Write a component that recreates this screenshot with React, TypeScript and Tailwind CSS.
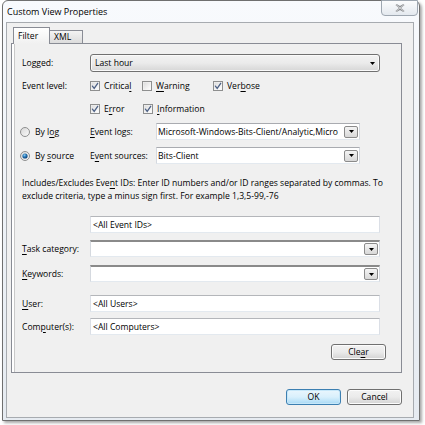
import type { ReactNode } from 'react'

// access-key letter, underlined the way Windows dialogs show them
const Key = ({ children }: { children: ReactNode }) => (
  <span className="underline decoration-[0.6px] underline-offset-[1.5px]">{children}</span>
)

const CheckBox = ({ checked, children, className = '' }: { checked?: boolean; children: ReactNode; className?: string }) => (
  <div className={`flex items-center gap-[4px] ${className}`}>
    <svg width="10" height="10" viewBox="0 0 10 10" className="shrink-0">
      <defs>
        <linearGradient id="cbFill" x1="0" y1="0" x2="1" y2="1">
          <stop offset="0" stopColor="#dcdcdc" />
          <stop offset="1" stopColor="#ffffff" />
        </linearGradient>
      </defs>
      <rect x="0.5" y="0.5" width="9" height="9" fill="#f4f4f4" stroke="#8e8f8f" />
      <rect x="1.5" y="1.5" width="7" height="7" fill="url(#cbFill)" />
      {checked && (
        <path d="M2.4 5.1 L4.2 7.3 L7.7 2.3" stroke="#4d6185" strokeWidth="1.3" fill="none" strokeLinecap="round" />
      )}
    </svg>
    <span>{children}</span>
  </div>
)

const Radio = ({ checked, children }: { checked?: boolean; children: ReactNode }) => (
  <div className="flex items-center gap-[5px]">
    <svg width="10" height="10" viewBox="0 0 10 10" className="shrink-0">
      <defs>
        <radialGradient id="rbDot" cx="0.4" cy="0.35" r="0.7">
          <stop offset="0" stopColor="#8fd0f5" />
          <stop offset="0.5" stopColor="#1f6fb0" />
          <stop offset="1" stopColor="#0d3b6e" />
        </radialGradient>
        <linearGradient id="rbFill" x1="0" y1="0" x2="1" y2="1">
          <stop offset="0" stopColor="#d6d6d6" />
          <stop offset="1" stopColor="#fbfbfb" />
        </linearGradient>
      </defs>
      <circle cx="5" cy="5" r="4.5" fill="url(#rbFill)" stroke="#8e8f8f" />
      {checked && <circle cx="5" cy="5" r="2.6" fill="url(#rbDot)" />}
    </svg>
    <span>{children}</span>
  </div>
)

const Arrow = () => (
  <svg width="5" height="3" viewBox="0 0 5 3">
    <path d="M0 0 H5 L2.5 3 Z" fill="#000" />
  </svg>
)

// small drop button that sits inside an editable combo
const DropButton = () => (
  <div className="mr-[1px] flex h-[12px] w-[14px] shrink-0 items-center justify-center rounded-[2px] border border-[#8b8b8b] bg-gradient-to-b from-[#f4f4f4] to-[#d8d8d8]">
    <Arrow />
  </div>
)

const EditCombo = ({ value, width, strongTop }: { value?: string; width: string; strongTop?: boolean }) => (
  <div
    className={`flex h-[17px] items-center bg-white border border-b-[#e3e9ef] border-x-[#d5d9df] ${
      strongTop ? 'border-t-2 border-t-[#8a8a8a]' : 'border-t-[#a9abb0]'
    } ${width}`}
  >
    <div className="flex-1 overflow-hidden whitespace-nowrap pl-[1px]">{value}</div>
    <DropButton />
  </div>
)

const TextBox = ({ value }: { value: string }) => (
  <div className="flex h-[17px] w-[290px] items-center border border-t-[#b4b6ba] border-x-[#dbdfe6] border-b-[#e3e9ef] bg-white pl-[2px]">
    {value}
  </div>
)

const Button = ({ children, primary }: { children: ReactNode; primary?: boolean }) => (
  <div
    className={`flex h-[16px] items-center justify-center rounded-[3px] border ${
      primary
        ? 'border-[#3c7fb1] bg-gradient-to-b from-[#eaf6fd] via-[#d9f0fc] to-[#a7d9f5] shadow-[inset_0_0_0_1px_#c6e7f9]'
        : 'border-[#707070] bg-gradient-to-b from-[#f2f2f2] via-[#ebebeb] to-[#d3d3d3] shadow-[inset_0_0_0_1px_#fcfcfc]'
    } w-[55px]`}
  >
    {children}
  </div>
)

export default function App() {
  return (
    <div className="h-[425px] w-[425px] overflow-hidden bg-white pt-0 font-['Open_Sans',sans-serif] text-[8.6px] leading-[12px] text-black">
      <div className="ml-[2px] flex h-[421px] w-[418px] flex-col rounded-t-[6px] border border-[#6f6f6f] bg-gradient-to-b from-[#f8fafd] via-[#eef2f7] to-[#e6ebf1] shadow-[2px_2px_3px_rgba(0,0,0,0.35)]">
        {/* title bar */}
        <div className="relative flex h-[21px] shrink-0 items-center pl-[4px] text-[9px]">
          <span>Custom View Properties</span>
          <div className="absolute right-[1px] top-[-1px] flex h-[16px] w-[37px] items-center justify-center rounded-b-[4px] border border-[#9ea7b1] bg-gradient-to-b from-[#fbfcfd] to-[#e4e9ef]">
            <svg width="10" height="8" viewBox="0 0 10 8">
              <path d="M1 0.5 L5 3 L9 0.5 M1 7.5 L5 5 L9 7.5 M1 0.5 L9 7.5 M9 0.5 L1 7.5" stroke="#8c8f93" strokeWidth="1.6" fill="none" />
              <path d="M1 0.5 L9 7.5 M9 0.5 L1 7.5" stroke="#f5f5f5" strokeWidth="0.6" fill="none" />
            </svg>
          </div>
        </div>

        {/* client area */}
        <div className="mb-[2px] ml-[3px] flex w-[408px] flex-1 flex-col border border-[#a7abb0] bg-[#f0f0f0] pt-[4px]">
          {/* tabs */}
          <div className="ml-[4px] flex h-[16px] items-end pl-[2px]">
            <div className="relative z-10 -mb-px flex h-[17px] w-[37px] items-start border border-b-0 border-[#898c95] bg-gradient-to-b from-[#ffffff] to-[#f0f0f0] pl-[4px] pt-[2px]">
              Filter
            </div>
            <div className="flex h-[13px] w-[33px] items-center border border-l-0 border-b-0 border-[#898c95] bg-gradient-to-b from-[#f3f3f3] to-[#dcdcdc] pl-[4px]">
              XML
            </div>
          </div>

          {/* tab page */}
          <div className="ml-[4px] flex h-[330px] w-[391px] flex-col border border-[#898c95] bg-[#f0f0f0] shadow-[inset_2px_0_0_#ffffff,inset_3px_0_0_#c9c9c9]">
            <div className="mt-[10px] flex h-[18px] items-center pl-[10px]">
              <div className="w-[68px]">Logged:</div>
              <div className="flex h-[18px] w-[290px] items-center justify-between rounded-[3px] border border-[#707070] bg-gradient-to-b from-[#f2f2f2] via-[#ebebeb] to-[#d6d6d6] pl-[4px] pr-[4px] shadow-[inset_0_0_0_1px_#fafafa]">
                <span>Last hour</span>
                <Arrow />
              </div>
            </div>

            <div className="mt-[7px] flex h-[13px] items-center pl-[10px]">
              <div className="w-[68px]">Event level:</div>
              <CheckBox checked className="w-[52px]">
                Critica<Key>l</Key>
              </CheckBox>
              <CheckBox className="w-[71px]">
                <Key>W</Key>arning
              </CheckBox>
              <CheckBox checked>
                Ver<Key>b</Key>ose
              </CheckBox>
            </div>

            <div className="mt-[10px] flex h-[13px] items-center pl-[78px]">
              <CheckBox checked className="w-[53px]">
                E<Key>r</Key>ror
              </CheckBox>
              <CheckBox checked>
                <Key>I</Key>nformation
              </CheckBox>
            </div>

            <div className="mt-[8px] flex h-[17px] items-center pl-[8px]">
              <div className="w-[70px]">
                <Radio>
                  By l<Key>o</Key>g
                </Radio>
              </div>
              <div className="w-[66px]">
                <Key>E</Key>vent logs:
              </div>
              <EditCombo width="w-[204px]" value="Microsoft-Windows-Bits-Client/Analytic,Micro" />
            </div>

            <div className="mt-[7px] flex h-[17px] items-center pl-[8px]">
              <div className="w-[70px]">
                <Radio checked>
                  By <Key>s</Key>ource
                </Radio>
              </div>
              <div className="w-[66px]">
                E<Key>v</Key>ent sources:
              </div>
              <EditCombo width="w-[204px]" value="Bits-Client" />
            </div>

            <div className="mt-[13px] pl-[10px] leading-[13px]">
              <div className="whitespace-nowrap">
                Includes/Excludes Eve<Key>n</Key>t IDs: Enter ID numbers and/or ID ranges separated by commas. To
              </div>
              <div className="whitespace-nowrap">exclude criteria, type a minus sign first. For example 1,3,5-99,-76</div>
            </div>

            <div className="mt-[13px] pl-[78px]">
              <TextBox value="<All Event IDs>" />
            </div>

            <div className="mt-[7px] flex h-[17px] items-center pl-[10px]">
              <div className="w-[68px]">
                <Key>T</Key>ask category:
              </div>
              <EditCombo width="w-[290px]" strongTop />
            </div>

            <div className="mt-[8px] flex h-[17px] items-center pl-[10px]">
              <div className="w-[68px]">
                <Key>K</Key>eywords:
              </div>
              <EditCombo width="w-[290px]" strongTop />
            </div>

            <div className="mt-[13px] flex h-[17px] items-center pl-[10px]">
              <div className="w-[68px]">
                <Key>U</Key>ser:
              </div>
              <TextBox value="<All Users>" />
            </div>

            <div className="mt-[6px] flex h-[17px] items-center pl-[10px]">
              <div className="w-[68px]">
                Com<Key>p</Key>uter(s):
              </div>
              <TextBox value="<All Computers>" />
            </div>

            <div className="mt-[9px] pl-[319px]">
              <Button>
                Cle<Key>a</Key>r
              </Button>
            </div>
          </div>

          {/* dialog buttons */}
          <div className="ml-[4px] mt-[16px] flex w-[391px] justify-end gap-[6px]">
            <Button primary>OK</Button>
            <Button>Cancel</Button>
          </div>
        </div>
      </div>
    </div>
  )
}
